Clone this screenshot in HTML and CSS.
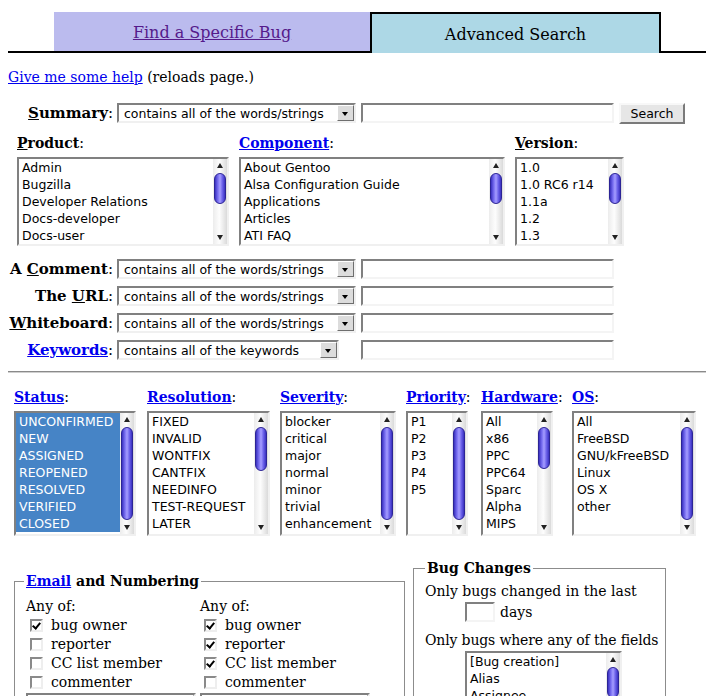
FILE: index.html
```html
<!DOCTYPE html>
<html lang="en">
<head>
    <meta charset="UTF-8">
    <title>Search for bugs</title>
    <link rel="stylesheet" href="styles.css">
</head>
<body>
    <div class="tabs">
        <div class="tab-gap left"></div>
        <div class="tab tab-other"><a href="#" class="visited">Find a Specific Bug</a></div>
        <div class="tab tab-current">Advanced Search</div>
        <div class="tab-gap right"></div>
    </div>

    <p class="help"><a href="#">Give me some help</a> (reloads page.)</p>

    <form class="query">
        <!-- summary -->
        <div class="row summary-row">
            <div class="row-label"><b><u>S</u>ummary</b>:</div>
            <div class="select"><span>contains all of the words/strings</span><span class="drop"></span></div>
            <div class="text"></div>
            <div class="button">Search</div>
        </div>

        <!-- product / component / version -->
        <div class="lists top-lists">
            <div class="col col-product">
                <div class="col-label"><b><u>P</u>roduct</b>:</div>
                <div class="listbox lb-5">
                    <div class="options">
                        <div>Admin</div>
                        <div>Bugzilla</div>
                        <div>Developer Relations</div>
                        <div>Docs-developer</div>
                        <div>Docs-user</div>
                    </div>
                    <div class="sb"><div class="sb-btn"><span class="up"></span></div><div class="sb-track"><div class="sb-thumb thumb-s"></div></div><div class="sb-btn"><span class="down"></span></div></div>
                </div>
            </div>
            <div class="col col-component">
                <div class="col-label"><a href="#"><b>Component</b></a>:</div>
                <div class="listbox lb-5">
                    <div class="options">
                        <div>About Gentoo</div>
                        <div>Alsa Configuration Guide</div>
                        <div>Applications</div>
                        <div>Articles</div>
                        <div>ATI FAQ</div>
                    </div>
                    <div class="sb"><div class="sb-btn"><span class="up"></span></div><div class="sb-track"><div class="sb-thumb thumb-s"></div></div><div class="sb-btn"><span class="down"></span></div></div>
                </div>
            </div>
            <div class="col col-version">
                <div class="col-label"><b><u>V</u>ersion</b>:</div>
                <div class="listbox lb-5">
                    <div class="options">
                        <div>1.0</div>
                        <div>1.0 RC6 r14</div>
                        <div>1.1a</div>
                        <div>1.2</div>
                        <div>1.3</div>
                    </div>
                    <div class="sb"><div class="sb-btn"><span class="up"></span></div><div class="sb-track"><div class="sb-thumb thumb-s"></div></div><div class="sb-btn"><span class="down"></span></div></div>
                </div>
            </div>
        </div>

        <!-- text fields -->
        <div class="text-rows">
            <div class="row">
                <div class="row-label"><b>A <u>C</u>omment</b>:</div>
                <div class="select"><span>contains all of the words/strings</span><span class="drop"></span></div>
                <div class="text"></div>
            </div>
            <div class="row">
                <div class="row-label"><b>The <u>U</u>RL</b>:</div>
                <div class="select"><span>contains all of the words/strings</span><span class="drop"></span></div>
                <div class="text"></div>
            </div>
            <div class="row">
                <div class="row-label"><b><u>W</u>hiteboard</b>:</div>
                <div class="select"><span>contains all of the words/strings</span><span class="drop"></span></div>
                <div class="text"></div>
            </div>
            <div class="row">
                <div class="row-label"><a href="#"><b>Keywords</b></a>:</div>
                <div class="select select-short"><span>contains all of the keywords</span><span class="drop"></span></div>
                <div class="text text-far"></div>
            </div>
        </div>

        <hr>

        <!-- status etc -->
        <div class="lists status-lists">
            <div class="col col-status">
                <div class="col-label"><a href="#"><b>Status</b></a>:</div>
                <div class="listbox lb-7">
                    <div class="options selected">
                        <div>UNCONFIRMED</div>
                        <div>NEW</div>
                        <div>ASSIGNED</div>
                        <div>REOPENED</div>
                        <div>RESOLVED</div>
                        <div>VERIFIED</div>
                        <div>CLOSED</div>
                    </div>
                    <div class="sb"><div class="sb-btn"><span class="up"></span></div><div class="sb-track"><div class="sb-thumb thumb-l"></div></div><div class="sb-btn"><span class="down"></span></div></div>
                </div>
            </div>
            <div class="col col-resolution">
                <div class="col-label"><a href="#"><b>Resolution</b></a>:</div>
                <div class="listbox lb-7">
                    <div class="options">
                        <div>FIXED</div>
                        <div>INVALID</div>
                        <div>WONTFIX</div>
                        <div>CANTFIX</div>
                        <div>NEEDINFO</div>
                        <div>TEST-REQUEST</div>
                        <div>LATER</div>
                    </div>
                    <div class="sb"><div class="sb-btn"><span class="up"></span></div><div class="sb-track"><div class="sb-thumb thumb-m"></div></div><div class="sb-btn"><span class="down"></span></div></div>
                </div>
            </div>
            <div class="col col-severity">
                <div class="col-label"><a href="#"><b>Severity</b></a>:</div>
                <div class="listbox lb-7">
                    <div class="options">
                        <div>blocker</div>
                        <div>critical</div>
                        <div>major</div>
                        <div>normal</div>
                        <div>minor</div>
                        <div>trivial</div>
                        <div>enhancement</div>
                    </div>
                    <div class="sb"><div class="sb-btn"><span class="up"></span></div><div class="sb-track"><div class="sb-thumb thumb-l"></div></div><div class="sb-btn"><span class="down"></span></div></div>
                </div>
            </div>
            <div class="col col-priority">
                <div class="col-label"><a href="#"><b>Priority</b></a>:</div>
                <div class="listbox lb-7">
                    <div class="options">
                        <div>P1</div>
                        <div>P2</div>
                        <div>P3</div>
                        <div>P4</div>
                        <div>P5</div>
                    </div>
                    <div class="sb"><div class="sb-btn"><span class="up"></span></div><div class="sb-track"><div class="sb-thumb thumb-l"></div></div><div class="sb-btn"><span class="down"></span></div></div>
                </div>
            </div>
            <div class="col col-hardware">
                <div class="col-label"><a href="#"><b>Hardware</b></a>:</div>
                <div class="listbox lb-7">
                    <div class="options">
                        <div>All</div>
                        <div>x86</div>
                        <div>PPC</div>
                        <div>PPC64</div>
                        <div>Sparc</div>
                        <div>Alpha</div>
                        <div>MIPS</div>
                    </div>
                    <div class="sb"><div class="sb-btn"><span class="up"></span></div><div class="sb-track"><div class="sb-thumb thumb-hw"></div></div><div class="sb-btn"><span class="down"></span></div></div>
                </div>
            </div>
            <div class="col col-os">
                <div class="col-label"><a href="#"><b>OS</b></a>:</div>
                <div class="listbox lb-7">
                    <div class="options">
                        <div>All</div>
                        <div>FreeBSD</div>
                        <div>GNU/kFreeBSD</div>
                        <div>Linux</div>
                        <div>OS X</div>
                        <div>other</div>
                    </div>
                    <div class="sb"><div class="sb-btn"><span class="up"></span></div><div class="sb-track"><div class="sb-thumb thumb-l"></div></div><div class="sb-btn"><span class="down"></span></div></div>
                </div>
            </div>
        </div>

        <!-- email and bug changes -->
        <div class="boxes">
            <fieldset class="fs-email">
                <legend><a href="#">Email</a> and Numbering</legend>
                <div class="email-cols">
                    <div class="email-col">
                        <div class="line">Any of:</div>
                        <div class="line"><span class="cb checked"></span>bug owner</div>
                        <div class="line"><span class="cb"></span>reporter</div>
                        <div class="line"><span class="cb"></span>CC list member</div>
                        <div class="line"><span class="cb"></span>commenter</div>
                        <div class="select select-email"><span>contains</span><span class="drop"></span></div>
                    </div>
                    <div class="email-col">
                        <div class="line">Any of:</div>
                        <div class="line"><span class="cb checked"></span>bug owner</div>
                        <div class="line"><span class="cb checked"></span>reporter</div>
                        <div class="line"><span class="cb checked"></span>CC list member</div>
                        <div class="line"><span class="cb"></span>commenter</div>
                        <div class="select select-email"><span>contains</span><span class="drop"></span></div>
                    </div>
                </div>
            </fieldset>

            <fieldset class="fs-changes">
                <legend>Bug Changes</legend>
                <div class="line first-line">Only bugs changed in the last</div>
                <div class="line days"><div class="text text-days"></div>days</div>
                <div class="line fields-line">Only bugs where any of the fields</div>
                <div class="listbox lb-fields">
                    <div class="options">
                        <div>[Bug creation]</div>
                        <div>Alias</div>
                        <div>Assignee</div>
                        <div>Blocks</div>
                        <div>CC</div>
                    </div>
                    <div class="sb"><div class="sb-btn"><span class="up"></span></div><div class="sb-track"><div class="sb-thumb thumb-s"></div></div><div class="sb-btn"><span class="down"></span></div></div>
                </div>
            </fieldset>
        </div>
    </form>
</body>
</html>
```

FILE: styles.css
```css
body {
    margin: 8px 0 0 8px;
    font-family: "DejaVu Serif", serif;
    font-size: 14px;
    line-height: 17px;
    color: #000;
    background: #fff;
}
a {
    color: #0000ee;
}
a.visited {
    color: #551a8b;
}

/* tabs */
.tabs {
    display: flex;
    margin-top: 4px;
    height: 41px;
}
.tab-gap {
    border-bottom: 2px solid #000;
}
.tab-gap.left {
    width: 46px;
}
.tab-gap.right {
    flex: 1;
}
.tab {
    display: flex;
    align-items: center;
    justify-content: center;
    font-size: 16px;
    padding-top: 1px;
}
.tab-other {
    width: 316px;
    background-color: #bbbbee;
    border-bottom: 2px solid #000;
}
.tab-current {
    width: 287px;
    background-color: lightblue;
    border: 2px solid #000;
    border-bottom: none;
}

.help {
    margin: 16px 0 0;
}

/* form controls */
.row {
    display: flex;
    align-items: center;
    height: 20px;
}
.summary-row {
    margin-top: 17px;
}
.row-label {
    width: 105px;
    margin-right: 4px;
    text-align: right;
    white-space: nowrap;
    font-size: 15px;
}
.select {
    box-sizing: border-box;
    width: 239px;
    height: 20px;
    display: flex;
    align-items: center;
    padding-left: 5px;
    border: 2px solid;
    border-color: #808080 #f0f0f0 #f0f0f0 #808080;
    background: #fff;
    font-family: "DejaVu Sans", sans-serif;
    font-size: 12.5px;
    white-space: nowrap;
}
.select-short {
    width: 222px;
}
.drop {
    box-sizing: border-box;
    margin-left: auto;
    width: 17px;
    height: 16px;
    border: 1px solid;
    border-color: #fff #6e6e6e #6e6e6e #fff;
    background: #dcdcdc;
    position: relative;
}
.drop::after {
    content: "";
    position: absolute;
    left: 4px;
    top: 6px;
    border-left: 3px solid transparent;
    border-right: 3px solid transparent;
    border-top: 4px solid #000;
}
.text {
    box-sizing: border-box;
    width: 253px;
    height: 20px;
    margin-left: 5px;
    border: 2px solid;
    border-color: #808080 #f4f4f4 #f4f4f4 #808080;
    background: #fff;
}
.text-far {
    margin-left: 22px;
}
.button {
    box-sizing: border-box;
    width: 66px;
    height: 21px;
    margin-left: 5px;
    border: 2px solid;
    border-color: #f8f8f8 #7a7a7a #7a7a7a #f8f8f8;
    background: #e6e6e6;
    font-family: "DejaVu Sans", sans-serif;
    font-size: 12.5px;
    text-align: center;
    line-height: 17px;
}

/* list boxes */
.lists {
    display: flex;
    gap: 10px;
}
.top-lists {
    margin: 12px 0 0 9px;
}
.col-label {
    white-space: nowrap;
    margin-bottom: 5px;
}
.col-product { width: 212px; }
.col-component { width: 266px; }
.col-version { width: 109px; }

.listbox {
    box-sizing: border-box;
    display: flex;
    border: 2px solid;
    border-color: #808080 #f0f0f0 #f0f0f0 #808080;
    background: #fff;
    font-family: "DejaVu Sans", sans-serif;
    font-size: 12.5px;
    line-height: 17px;
}
.lb-5 {
    height: 89px;
}
.lb-7 {
    height: 125px;
}
.options {
    flex: 1;
    overflow: hidden;
    white-space: nowrap;
}
.options div {
    padding-left: 3px;
}
.options.selected div {
    background: #4684c6;
    color: #fff;
}
.sb {
    width: 14px;
    display: flex;
    flex-direction: column;
    background: linear-gradient(to right, #ececec, #fdfdfd 45%, #dadada);
}
.sb-btn {
    height: 13px;
    display: flex;
    align-items: center;
    justify-content: center;
}
.up {
    border-left: 3px solid transparent;
    border-right: 3px solid transparent;
    border-bottom: 5px solid #222;
}
.down {
    border-left: 3px solid transparent;
    border-right: 3px solid transparent;
    border-top: 5px solid #222;
}
.sb-track {
    flex: 1;
    padding: 1px 1px 0;
}
.sb-thumb {
    box-sizing: border-box;
    height: 31px;
    border: 1px solid #2c2496;
    border-radius: 6px;
    background: linear-gradient(to right, #3a31c0, #7a70f2 30%, #a59dff 50%, #6a60e8 75%, #3a31c0);
}
.thumb-m { height: 44px; }
.thumb-hw { height: 42px; }
.thumb-l { height: 93px; }

.text-rows {
    margin-top: 13px;
    display: flex;
    flex-direction: column;
    gap: 7px;
}

hr {
    margin: 11px 0 0;
    border: none;
    border-top: 1px solid #8a8a8a;
    border-bottom: 1px solid #cfcfcf;
}

.status-lists {
    margin: 16px 0 0 6px;
}
.col-status { width: 123px; }
.col-resolution { width: 123px; }
.col-severity { width: 116px; }
.col-priority { width: 65px; }
.col-hardware { width: 81px; }
.col-os { width: 124px; }
.col-status .listbox { width: 122px; }
.col-priority .listbox { width: 62px; }
.col-hardware .listbox { width: 72px; }

/* fieldsets */
.boxes {
    display: flex;
    align-items: flex-start;
    margin-top: 24px;
}
fieldset {
    margin: 0;
    padding: 0 11px 10px;
    border: 1px solid #8c8c8c;
    min-width: 0;
}
legend {
    padding: 0 2px;
    margin-left: -2px;
    font-weight: bold;
}
.fs-email {
    width: 391px;
    box-sizing: border-box;
    margin: 13px 0 0 6px;
}
.fs-changes {
    width: 253px;
    box-sizing: border-box;
    margin-left: 8px;
    padding-right: 4px;
}
.fs-changes legend {
    margin-left: 0;
}
.email-cols {
    display: flex;
    margin-top: 7px;
}
.email-col {
    width: 174px;
}
.line {
    display: flex;
    align-items: center;
    height: 19px;
    white-space: nowrap;
}
.cb {
    box-sizing: border-box;
    width: 13px;
    height: 13px;
    margin: 0 8px 0 4px;
    border: 2px solid;
    border-color: #8a8a8a #eeeeee #eeeeee #8a8a8a;
    background: #fff;
    position: relative;
}
.cb.checked::after {
    content: "";
    position: absolute;
    left: 2px;
    top: 0;
    width: 3px;
    height: 6px;
    border-right: 2px solid #000;
    border-bottom: 2px solid #000;
    transform: rotate(40deg);
}
.select-email {
    width: 170px;
    margin-top: 1px;
}

.first-line {
    margin-top: 5px;
}
.days {
    height: 22px;
}
.text-days {
    width: 30px;
    height: 20px;
    margin: 0 5px 0 40px;
}
.fields-line {
    margin-top: 8px;
    letter-spacing: -0.15px;
}
.lb-fields {
    width: 157px;
    height: 89px;
    margin: 1px 0 0 40px;
}
```
